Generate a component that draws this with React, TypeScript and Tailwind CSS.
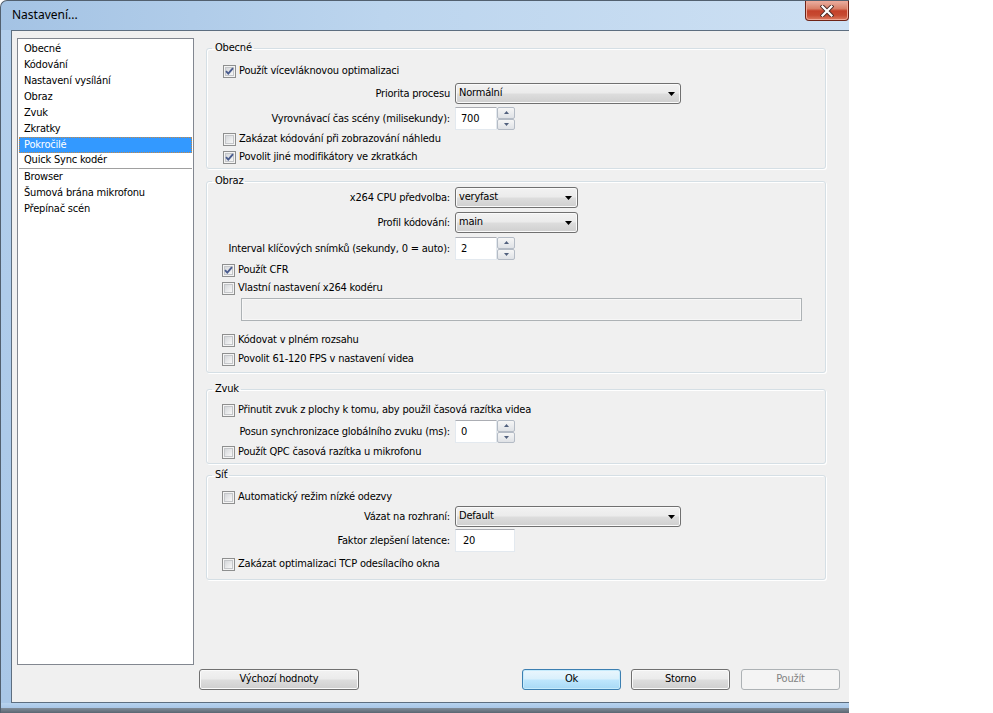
import React from "react";

type CheckProps = { checked?: boolean };

function CheckBox({ checked }: CheckProps) {
  return (
    <span className="relative flex h-[13px] w-[13px] shrink-0 items-center justify-center border border-[#8e8f8f] bg-[#f4f4f4]">
      <span className="h-[9px] w-[9px] border border-[#c4c6c9] bg-[linear-gradient(135deg,#d5d7da,#f8f8f8)]" />
      {checked && (
        <svg className="absolute left-0 top-0" width="11" height="11" viewBox="0 0 11 11">
          <path d="M2 5.2 L4.3 7.6 L9 2.2" fill="none" stroke="#4a5c8e" strokeWidth="1.9" />
        </svg>
      )}
    </span>
  );
}

function CheckRow({ label, checked, className }: { label: string; checked?: boolean; className: string }) {
  return (
    <div className={"flex h-[16px] items-center gap-[3px] " + className}>
      <CheckBox checked={checked} />
      <span className="whitespace-nowrap">{label}</span>
    </div>
  );
}

function Combo({ value, wide }: { value: string; wide?: boolean }) {
  return (
    <div
      className={
        "flex h-[21px] items-center rounded-[3px] border border-[#707070] bg-[linear-gradient(#f2f2f2_0%,#ebebeb_48%,#dddddd_52%,#cfcfcf_100%)] pl-[3px] pr-[5px] shadow-[inset_0_0_0_1px_#fafafa] " +
        (wide ? "w-[226px]" : "w-[123px]")
      }
    >
      <span className="flex-1 whitespace-nowrap">{value}</span>
      <svg width="7" height="4" viewBox="0 0 7 4">
        <path d="M0 0 H7 L3.5 4 Z" fill="#000" />
      </svg>
    </div>
  );
}

function SpinArrow({ up }: { up?: boolean }) {
  return (
    <span className="flex flex-1 items-center justify-center rounded-[2px] border border-[#b4bbc5] bg-[linear-gradient(#f6f6f6,#dfe2e6)]">
      <svg width="5" height="3" viewBox="0 0 5 3">
        <path d={up ? "M0 3 H5 L2.5 0 Z" : "M0 0 H5 L2.5 3 Z"} fill="#51607d" />
      </svg>
    </span>
  );
}

function Spin({ value }: { value: string }) {
  return (
    <div className="flex h-[23px] w-[60px]">
      <div className="flex flex-1 items-start border border-[#e3e9ef] border-t-[#abadb3] bg-white pl-[5px] pt-[3px]">
        {value}
      </div>
      <div className="flex w-[18px] flex-col">
        <SpinArrow up />
        <SpinArrow />
      </div>
    </div>
  );
}

function TextBox({ value }: { value: string }) {
  return (
    <div className="flex h-[23px] w-[60px] items-start border border-[#e3e9ef] border-t-[#abadb3] bg-white pl-[7px] pt-[3px]">
      {value}
    </div>
  );
}

function LabelRow({ label, children, className }: { label: string; children: React.ReactNode; className: string }) {
  return (
    <div className={"flex items-center " + className}>
      <div className="w-[248px] whitespace-nowrap pr-[5px] pt-[2px] text-right">{label}</div>
      {children}
    </div>
  );
}

function Group({ title, className, children }: { title: string; className: string; children: React.ReactNode }) {
  return (
    <fieldset
      className={
        "w-[620px] rounded-[3px] border border-[#d5dfe5] shadow-[inset_1px_1px_0_#ffffff,1px_1px_0_#ffffff] " + className
      }
    >
      <legend className="ml-[5px] pl-[3px] pr-[2px] leading-[12px]">{title}</legend>
      <div className="flex flex-col">{children}</div>
    </fieldset>
  );
}

function Button({ label, className, kind }: { label: string; className: string; kind?: "default" | "disabled" }) {
  const look =
    kind === "default"
      ? "border-[#3c7fb1] bg-[linear-gradient(#eaf6fd_0%,#d9f0fc_48%,#bee6fd_52%,#a7d9f5_100%)] shadow-[inset_0_0_0_1px_#c6ebfc] text-black"
      : kind === "disabled"
      ? "border-[#adb2b5] bg-[#f4f4f4] text-[#838383]"
      : "border-[#707070] bg-[linear-gradient(#f2f2f2_0%,#ebebeb_48%,#dddddd_52%,#cfcfcf_100%)] shadow-[inset_0_0_0_1px_#fafafa] text-black";
  return (
    <div className={"flex h-[21px] w-[99px] items-center justify-center rounded-[3px] border " + look + " " + className}>
      {label}
    </div>
  );
}

const pages = [
  "Obecné",
  "Kódování",
  "Nastavení vysílání",
  "Obraz",
  "Zvuk",
  "Zkratky",
  "Pokročilé",
  "Quick Sync kodér",
];
const plugins = ["Browser", "Šumová brána mikrofonu", "Přepínač scén"];

export default function App() {
  return (
    <div className="flex h-[713px] w-[993px] bg-white font-['DejaVu_Sans_Condensed','Liberation_Sans',sans-serif] text-[11px] tracking-[-0.2px] text-black">
      <div className="flex h-full w-[849px] flex-col overflow-hidden rounded-tl-[7px] border-l border-t border-[#52606f] bg-[linear-gradient(90deg,#a4c3e4_0%,#bcd5ee_45%,#cde0f3_100%)]">
        {/* title bar */}
        <div className="flex h-[29px] items-start">
          <span className="pl-[11px] pt-[6px] font-['Noto_Sans','Liberation_Sans',sans-serif] text-[12px] leading-[16px] tracking-normal">
            Nastavení...
          </span>
          <div className="ml-auto flex h-[20px] w-[44px] items-center justify-center rounded-b-[4px] border border-t-0 border-[#6e2417] bg-[linear-gradient(#eab0a2_0%,#d98068_40%,#c4412a_52%,#c74a31_75%,#dd7c62_100%)] shadow-[inset_0_0_0_1px_#efa795]">
            <svg width="14" height="12" viewBox="0 0 14 12">
              <path d="M2.5 1.5 L11.5 10.5 M11.5 1.5 L2.5 10.5" stroke="#4a2a25" strokeWidth="4" strokeLinecap="square" />
              <path d="M2.5 1.5 L11.5 10.5 M11.5 1.5 L2.5 10.5" stroke="#ffffff" strokeWidth="2.2" strokeLinecap="square" />
            </svg>
          </div>
        </div>

        <div className="flex flex-1">
          <div className="w-[10px] bg-[linear-gradient(#b3cfec,#a9c7e7)]" />
          <div className="flex flex-1 flex-col border-b border-l border-t border-[#5d6e80] bg-[#f0f0f0] pl-[5px] pt-[7px]">
            <div className="flex">
              {/* settings page list */}
              <div className="flex h-[627px] w-[177px] flex-col border border-[#828790] bg-white px-[1px] pt-[2px]">
                {pages.map((p) =>
                  p === "Pokročilé" ? (
                    <div
                      key={p}
                      className="flex h-[16px] items-center border border-dotted border-[#c48846] bg-[#3399ff] pl-[4px] text-white"
                    >
                      {p}
                    </div>
                  ) : (
                    <div
                      key={p}
                      className={
                        "flex h-[16px] items-center pl-[5px] " +
                        (p === "Quick Sync kodér" ? "border-b border-[#a0a0a0]" : "")
                      }
                    >
                      {p}
                    </div>
                  )
                )}
                {plugins.map((p) => (
                  <div key={p} className="flex h-[16px] items-center pl-[5px]">
                    {p}
                  </div>
                ))}
              </div>

              {/* settings groups */}
              <div className="ml-[12px] flex flex-col pt-[4px]">
                <Group title="Obecné" className="h-[127px]">
                  <CheckRow className="mt-[9px] pl-[16px]" checked label="Použít vícevláknovou optimalizaci" />
                  <LabelRow className="mt-[4px] h-[21px]" label="Priorita procesu">
                    <Combo value="Normální" wide />
                  </LabelRow>
                  <LabelRow className="mt-[3px] h-[23px]" label="Vyrovnávací čas scény (milisekundy):">
                    <Spin value="700" />
                  </LabelRow>
                  <CheckRow className="mt-[1px] pl-[16px]" label="Zakázat kódování při zobrazování náhledu" />
                  <CheckRow className="mt-[2px] pl-[16px]" checked label="Povolit jiné modifikátory ve zkratkách" />
                </Group>

                <Group title="Obraz" className="mt-[6px] h-[198px]">
                  <LabelRow className="mt-0 h-[21px]" label="x264 CPU předvolba:">
                    <Combo value="veryfast" />
                  </LabelRow>
                  <LabelRow className="mt-[4px] h-[21px]" label="Profil kódování:">
                    <Combo value="main" />
                  </LabelRow>
                  <LabelRow className="mt-[4px] h-[23px]" label="Interval klíčových snímků (sekundy, 0 = auto):">
                    <Spin value="2" />
                  </LabelRow>
                  <CheckRow className="mt-[2px] pl-[15px]" checked label="Použít CFR" />
                  <CheckRow className="mt-[2px] pl-[15px]" label="Vlastní nastavení x264 kodéru" />
                  <div className="ml-[34px] mt-[2px] h-[23px] w-[561px] border border-[#adb2b5] bg-[#f0f0f0] shadow-[inset_0_0_0_1px_#f7f7f7]" />
                  <CheckRow className="mt-[11px] pl-[15px]" label="Kódovat v plném rozsahu" />
                  <CheckRow className="mt-[3px] pl-[15px]" label="Povolit 61-120 FPS v nastavení videa" />
                </Group>

                <Group title="Zvuk" className="mt-[10px] h-[81px]">
                  <CheckRow
                    className="mt-[7px] pl-[15px]"
                    label="Přinutit zvuk z plochy k tomu, aby použil časová razítka videa"
                  />
                  <LabelRow className="mt-[2px] h-[23px]" label="Posun synchronizace globálního zvuku  (ms):">
                    <Spin value="0" />
                  </LabelRow>
                  <CheckRow className="mt-[1px] pl-[15px]" label="Použít QPC časová razítka u mikrofonu" />
                </Group>

                <Group title="Síť" className="mt-[5px] h-[111px]">
                  <CheckRow className="mt-[8px] pl-[15px]" label="Automatický režim nízké odezvy" />
                  <LabelRow className="mt-[1px] h-[21px]" label="Vázat na rozhraní:">
                    <Combo value="Default" wide />
                  </LabelRow>
                  <LabelRow className="mt-[2px] h-[23px]" label="Faktor zlepšení latence:">
                    <TextBox value="20" />
                  </LabelRow>
                  <CheckRow className="mt-[4px] pl-[15px]" label="Zakázat optimalizaci TCP odesílacího okna" />
                </Group>
              </div>
            </div>

            {/* dialog buttons */}
            <div className="mt-[4px] flex">
              <Button label="Výchozí hodnoty" className="ml-[182px] w-[160px]" />
              <Button label="Ok" className="ml-[163px]" kind="default" />
              <Button label="Storno" className="ml-[10px]" />
              <Button label="Použít" className="ml-[11px]" kind="disabled" />
            </div>
          </div>
        </div>

        {/* lower window frame */}
        <div className="h-[10px] bg-[linear-gradient(#b7d3ef_0%,#a9c7e7_50%,#7d8995_55%,#5b6571_100%)]" />
      </div>
      <div className="flex-1" />
    </div>
  );
}
